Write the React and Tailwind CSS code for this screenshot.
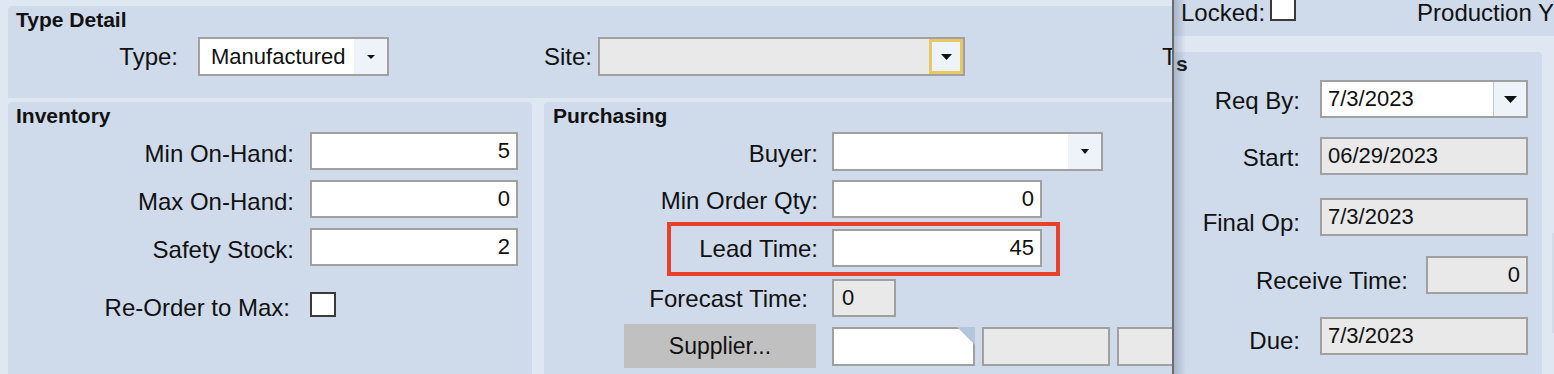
const Arrow = ({ w = 10, h = 6 }) => (
  <svg width={w} height={h} viewBox={`0 0 ${w} ${h}`}>
    <polygon points={`0,0 ${w},0 ${w / 2},${h}`} fill="#111" />
  </svg>
);

const Label = ({ className, children }) => (
  <div className={`text-right text-[24px] leading-[28px] whitespace-nowrap ${className}`}>{children}</div>
);

const Field = ({ className, value, right }) => (
  <div
    className={`border-2 border-[#a0a0a0] flex items-center px-[6px] text-[22px] leading-[26px] whitespace-nowrap ${
      right ? 'justify-end' : ''
    } ${className}`}
  >
    {value}
  </div>
);

const Checkbox = ({ className }) => (
  <div className={`w-[26px] h-[25px] border-2 border-[#3a3a3a] bg-white shrink-0 ${className}`} />
);

export default function App() {
  return (
    <div className="relative w-[1554px] h-[374px] overflow-hidden bg-[#dfe7f2] text-[#111] font-['Liberation_Sans',Arial,sans-serif]">
      {/* main form */}
      <div className="pt-[6px] pl-[8px] h-full flex flex-col">
        {/* Type Detail */}
        <div className="bg-[#cfdbeb] rounded-tl-[4px] h-[92px] pl-[8px] pt-[2px] shrink-0">
          <div className="text-[21px] font-bold leading-[24px]">Type Detail</div>
          <div className="flex items-center mt-[5px] h-[39px]">
            <Label className="w-[162px]">Type:</Label>
            <div className="ml-[20px] w-[191px] h-[39px] border-2 border-[#a0a0a0] bg-white flex">
              <div className="flex-1 pl-[11px] text-[22px] leading-[35px]">Manufactured</div>
              <div className="w-[33px] bg-[#eef3fa] flex items-center justify-center">
                <Arrow w={8} h={4} />
              </div>
            </div>
            <Label className="w-[203px]">Site:</Label>
            <div className="ml-[6px] w-[367px] h-[39px] border-2 border-[#a0a0a0] bg-[#e9e9e9] flex justify-end">
              <div className="w-[34px] h-full border-[3px] border-[#e8c862] bg-[#eef3fa] flex items-center justify-center">
                <Arrow w={11} h={6} />
              </div>
            </div>
            <Label className="ml-[197px]">T</Label>
          </div>
        </div>

        <div className="mt-[4px] flex gap-[12px] flex-1">
          {/* Inventory */}
          <div className="w-[524px] bg-[#cfdbeb] rounded-t-[4px] pl-[8px] pt-[2px]">
            <div className="text-[21px] font-bold leading-[24px]">Inventory</div>
            <div className="flex items-center mt-[4px] h-[38px]">
              <Label className="w-[278px] mt-[5px]">Min On-Hand:</Label>
              <Field className="ml-[16px] w-[208px] h-[38px] bg-white" value="5" right />
            </div>
            <div className="flex items-center mt-[10px] h-[38px]">
              <Label className="w-[278px] mt-[5px]">Max On-Hand:</Label>
              <Field className="ml-[16px] w-[208px] h-[38px] bg-white" value="0" right />
            </div>
            <div className="flex items-center mt-[10px] h-[38px]">
              <Label className="w-[278px] mt-[5px]">Safety Stock:</Label>
              <Field className="ml-[16px] w-[208px] h-[38px] bg-white" value="2" right />
            </div>
            <div className="flex items-center mt-[26px] h-[25px]">
              <Label className="w-[274px] mt-[6px]">Re-Order to Max:</Label>
              <Checkbox className="ml-[20px]" />
            </div>
          </div>

          {/* Purchasing */}
          <div className="flex-1 bg-[#cfdbeb] rounded-t-[4px] pl-[8px] pt-[2px]">
            <div className="text-[21px] font-bold leading-[24px] ml-[1px]">Purchasing</div>
            <div className="flex items-center mt-[4px] h-[39px]">
              <Label className="w-[266px] mt-[4px]">Buyer:</Label>
              <div className="ml-[14px] w-[271px] h-[39px] border-2 border-[#a0a0a0] bg-white flex justify-end">
                <div className="w-[33px] bg-[#eef3fa] flex items-center justify-center">
                  <Arrow w={8} h={5} />
                </div>
              </div>
            </div>
            <div className="flex items-center mt-[9px] h-[38px]">
              <Label className="w-[266px] mt-[4px]">Min Order Qty:</Label>
              <Field className="ml-[14px] w-[210px] h-[38px] bg-white" value="0" right />
            </div>
            <div className="relative flex items-center mt-[11px] h-[38px]">
              <Label className="w-[266px] mt-[2px]">Lead Time:</Label>
              <Field className="ml-[14px] w-[210px] h-[38px] bg-white" value="45" right />
              <div className="absolute left-[115px] top-[-7px] w-[393px] h-[54px] border-4 border-[#e8402a]" />
            </div>
            <div className="flex items-center mt-[12px] h-[38px]">
              <Label className="w-[256px] mt-[2px]">Forecast Time:</Label>
              <Field className="ml-[24px] w-[64px] h-[38px] bg-[#e9e9e9] !px-[8px]" value="0" />
            </div>
            <div className="flex items-center mt-[7px] h-[44px]">
              <div className="ml-[72px] w-[192px] h-[44px] bg-[#c0c0c0] flex items-center justify-center text-[23px]">
                Supplier...
              </div>
              <div className="relative ml-[16px] w-[143px] h-[39px] border-2 border-[#a0a0a0] bg-white">
                <svg className="absolute right-[-2px] top-[-2px]" width="18" height="18" viewBox="0 0 18 18">
                  <polygon points="0,0 18,0 18,18" fill="#b4c6de" />
                </svg>
              </div>
              <div className="ml-[7px] w-[128px] h-[39px] border-2 border-[#a0a0a0] bg-[#e9e9e9]" />
              <div className="ml-[7px] w-[128px] h-[39px] border-2 border-[#a0a0a0] bg-[#e9e9e9]" />
            </div>
          </div>
        </div>
      </div>

      {/* scheduling panel lying over the form */}
      <div className="absolute left-[1172px] top-0 right-0 bottom-0 border-l-2 border-[#6b6b6b] bg-[#dfe7f2] flex flex-col">
        <div className="h-[36px] bg-[#cfdbeb] flex items-start pl-[7px] shrink-0">
          <div className="text-[24px] leading-[28px] mt-[-1px]">Locked:</div>
          <Checkbox className="ml-[5px] mt-[-4px]" />
          <div className="ml-[121px] text-[24px] leading-[28px] mt-[-1px] whitespace-nowrap">Production Y</div>
        </div>
        <div className="h-[16px] shrink-0" />
        <div className="flex-1 flex">
          <div className="w-[368px] bg-[#cfdbeb] rounded-tr-[4px]">
            <div className="text-[21px] font-bold leading-[24px] pl-[2px]">s</div>
            <div className="flex mt-[4px] h-[38px]">
              <Label className="w-[126px] self-end mb-[3px] leading-[24px]">Req By:</Label>
              <div className="ml-[20px] w-[208px] h-[38px] border-2 border-[#a0a0a0] bg-white flex">
                <div className="flex-1 pl-[6px] text-[22px] leading-[34px]">7/3/2023</div>
                <div className="w-[33px] bg-[#eef3fa] border-l border-[#c8c8c8] flex items-center justify-center">
                  <Arrow w={13} h={7} />
                </div>
              </div>
            </div>
            <div className="flex mt-[19px] h-[38px]">
              <Label className="w-[126px] self-end mb-[3px] leading-[24px]">Start:</Label>
              <Field className="ml-[20px] w-[208px] h-[38px] bg-[#e9e9e9]" value="06/29/2023" />
            </div>
            <div className="flex mt-[23px] h-[38px]">
              <Label className="w-[126px] self-end mb-[-1px] leading-[24px]">Final Op:</Label>
              <Field className="ml-[20px] w-[208px] h-[38px] bg-[#e9e9e9]" value="7/3/2023" />
            </div>
            <div className="flex mt-[20px] h-[38px]">
              <Label className="w-[234px] self-end mb-[-1px] leading-[24px]">Receive Time:</Label>
              <Field className="ml-[18px] w-[102px] h-[38px] bg-[#e9e9e9]" value="0" right />
            </div>
            <div className="flex mt-[23px] h-[38px]">
              <Label className="w-[126px] self-end mb-[0px] leading-[24px]">Due:</Label>
              <Field className="ml-[20px] w-[208px] h-[38px] bg-[#e9e9e9]" value="7/3/2023" />
            </div>
          </div>
          <div className="flex-1 flex flex-col items-end">
            <div className="mt-[181px] h-[100px] w-[2px] bg-[#d2dbe8]" />
          </div>
        </div>
        <div className="absolute left-0 top-0 bottom-0 w-[12px] bg-linear-to-r from-[rgba(110,125,150,0.4)] to-transparent" />
      </div>
    </div>
  );
}
